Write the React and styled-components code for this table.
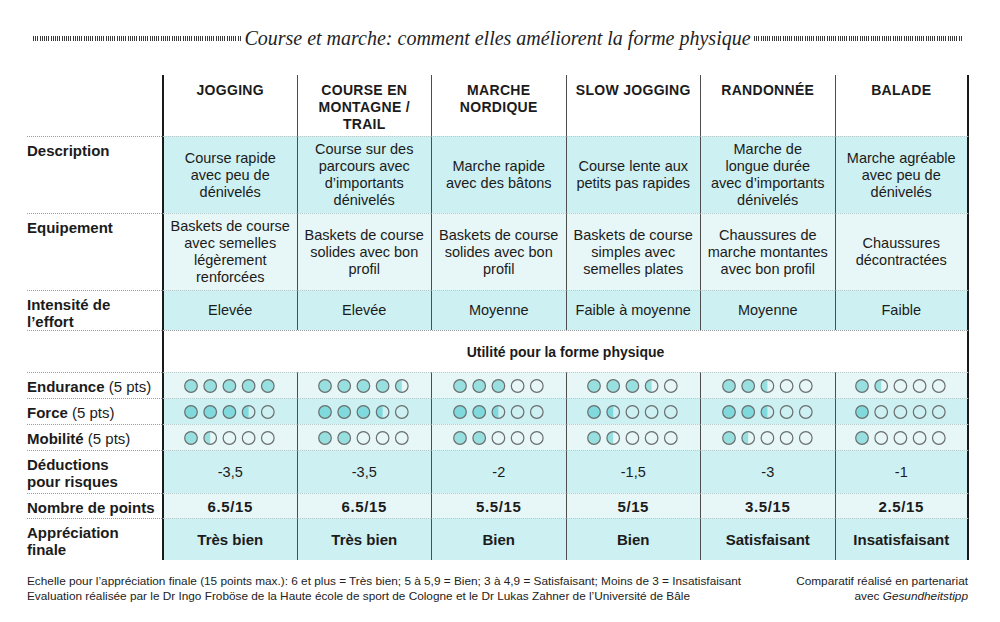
import React from 'react';
import styled, { createGlobalStyle } from 'styled-components';

const GlobalStyle = createGlobalStyle`
  html, body {
    margin: 0;
    padding: 0;
    background: #ffffff;
  }
  body {
    font-family: 'Liberation Sans', Arial, sans-serif;
    color: #1b1b1b;
  }
`;

const CYAN = '#cdf0f2';
const LIGHT = '#e7f6f6';

const Page = styled.div`
  width: 1000px;
  height: 622px;
  box-sizing: border-box;
  padding: 24px 32px 0 27px;
  overflow: hidden;
`;

const TitleRow = styled.div`
  display: flex;
  align-items: center;
  gap: 3px;
  height: 28px;
  padding: 0 6px;
`;

const Hatch = styled.div`
  flex: 1;
  height: 5px;
  margin-top: 1px;
  background: repeating-linear-gradient(90deg, #3a3a3a 0 1px, transparent 1px 2.2px);
`;

const Title = styled.h1`
  margin: 0;
  font-family: 'Liberation Serif', 'Times New Roman', serif;
  font-style: italic;
  font-weight: normal;
  font-size: 20px;
  color: #1f1f1f;
  white-space: nowrap;
`;

const Table = styled.div`
  display: grid;
  grid-template-columns: 135px repeat(6, 134.5px);
  margin-top: 23px;
`;

const Label = styled.div`
  box-sizing: border-box;
  padding: 5px 4px 0 0;
  font-size: 15px;
  line-height: 17px;
  font-weight: bold;
  white-space: pre-line;
  border-top: ${({ $noLine }) => ($noLine ? 'none' : '1px dotted #9c9c9c')};
  height: ${({ $h }) => $h}px;

  span {
    font-weight: normal;
  }
`;

const Cell = styled.div`
  box-sizing: border-box;
  height: ${({ $h }) => $h}px;
  display: flex;
  align-items: center;
  justify-content: center;
  text-align: center;
  padding: 0 2px;
  white-space: pre-line;
  background: ${({ $bg }) => $bg};
  font-size: ${({ $bold }) => ($bold ? '15px' : '14.5px')};
  font-weight: ${({ $bold }) => ($bold ? 'bold' : 'normal')};
  letter-spacing: ${({ $wide }) => ($wide ? '0.6px' : '0')};
  line-height: 17px;
  border-top: 1px dotted #b9cccc;
  border-left: ${({ $first }) => ($first ? '2px solid #1a1a1a' : '1px solid #4d4d4d')};
  border-right: ${({ $last }) => ($last ? '2px solid #1a1a1a' : 'none')};
`;

const HeadCell = styled(Cell)`
  align-items: flex-start;
  padding-top: 7px;
  border-top: none;
  font-size: 14px;
  letter-spacing: 0.3px;
  text-transform: uppercase;
`;

const SpanCell = styled.div`
  grid-column: span 6;
  box-sizing: border-box;
  height: ${({ $h }) => $h}px;
  display: flex;
  align-items: center;
  justify-content: center;
  font-size: 14px;
  font-weight: bold;
  border-top: 1px dotted #9c9c9c;
  border-left: 2px solid #1a1a1a;
  border-right: 2px solid #1a1a1a;
  background: #ffffff;
`;

const Footer = styled.div`
  display: flex;
  justify-content: space-between;
  margin-top: 14px;
  font-size: 11.8px;
  line-height: 15px;
  color: #222;
`;

const FootRight = styled.div`
  text-align: right;

  em {
    font-style: italic;
  }
`;

const activities = ['Jogging', 'Course en\nmontagne /\ntrail', 'Marche\nnordique', 'Slow jogging', 'Randonnée', 'Balade'];

const rows = [
  {
    label: 'Description',
    h: 77,
    bg: CYAN,
    values: [
      'Course rapide\navec peu de\ndénivelés',
      'Course sur des\nparcours avec\nd’importants\ndénivelés',
      'Marche rapide\navec des bâtons',
      'Course lente aux\npetits pas rapides',
      'Marche de\nlongue durée\navec d’importants\ndénivelés',
      'Marche agréable\navec peu de\ndénivelés',
    ],
  },
  {
    label: 'Equipement',
    h: 77,
    bg: LIGHT,
    values: [
      'Baskets de course\navec semelles\nlégèrement\nrenforcées',
      'Baskets de course\nsolides avec bon\nprofil',
      'Baskets de course\nsolides avec bon\nprofil',
      'Baskets de course\nsimples avec\nsemelles plates',
      'Chaussures de\nmarche montantes\navec bon profil',
      'Chaussures\ndécontractées',
    ],
  },
  {
    label: 'Intensité de\nl’effort',
    h: 40,
    bg: CYAN,
    values: ['Elevée', 'Elevée', 'Moyenne', 'Faible à moyenne', 'Moyenne', 'Faible'],
  },
  { span: 'Utilité pour la forme physique', h: 42 },
  { label: 'Endurance', pts: true, h: 26, bg: LIGHT, fill: '#98e0e0', dots: [5, 4.5, 3, 3.5, 2.5, 1.5] },
  { label: 'Force', pts: true, h: 26, bg: CYAN, fill: '#80dadd', dots: [3.5, 3.5, 2.5, 1.5, 2.5, 1] },
  { label: 'Mobilité', pts: true, h: 26, bg: LIGHT, fill: '#98e0e0', dots: [1.5, 2, 2, 1.5, 1.5, 1] },
  {
    label: 'Déductions\npour risques',
    h: 43,
    bg: CYAN,
    values: ['-3,5', '-3,5', '-2', '-1,5', '-3', '-1'],
  },
  {
    label: 'Nombre de points',
    h: 25,
    bg: LIGHT,
    bold: true,
    wide: true,
    values: ['6.5/15', '6.5/15', '5.5/15', '5/15', '3.5/15', '2.5/15'],
  },
  {
    label: 'Appréciation\nfinale',
    h: 42,
    bg: CYAN,
    bold: true,
    values: ['Très bien', 'Très bien', 'Bien', 'Bien', 'Satisfaisant', 'Insatisfaisant'],
  },
];

const Dots = ({ score, fill }) => {
  const r = 6.3;
  return (
    <svg width="94" height="16" viewBox="0 0 94 16">
      {[0, 1, 2, 3, 4].map((i) => {
        const cx = 8 + i * 19.2;
        const cy = 8;
        const level = Math.max(0, Math.min(1, score - i));
        return (
          <g key={i}>
            {level >= 1 && <circle cx={cx} cy={cy} r={r} fill={fill} />}
            {level > 0 && level < 1 && (
              <path d={`M${cx} ${cy - r} A${r} ${r} 0 0 0 ${cx} ${cy + r} Z`} fill={fill} />
            )}
            <circle cx={cx} cy={cy} r={r} fill="none" stroke="#6a6e6e" strokeWidth="1.2" />
          </g>
        );
      })}
    </svg>
  );
};

const App = () => (
  <Page>
    <GlobalStyle />
    <TitleRow>
      <Hatch />
      <Title>Course et marche: comment elles améliorent la forme physique</Title>
      <Hatch />
    </TitleRow>

    <Table>
      <Label $noLine $h={61} />
      {activities.map((a, i) => (
        <HeadCell key={a} $h={61} $bg="#fff" $bold $first={i === 0} $last={i === 5}>
          {a}
        </HeadCell>
      ))}

      {rows.map((row) => {
        if (row.span) {
          return (
            <React.Fragment key={row.span}>
              <Label $h={row.h} />
              <SpanCell $h={row.h}>{row.span}</SpanCell>
            </React.Fragment>
          );
        }
        return (
          <React.Fragment key={row.label}>
            <Label $h={row.h}>
              {row.label}
              {row.pts && <span> (5 pts)</span>}
            </Label>
            {(row.values || row.dots).map((v, i) => (
              <Cell
                key={i}
                $h={row.h}
                $bg={row.bg}
                $bold={row.bold}
                $wide={row.wide}
                $first={i === 0}
                $last={i === 5}
              >
                {row.dots ? <Dots score={v} fill={row.fill} /> : v}
              </Cell>
            ))}
          </React.Fragment>
        );
      })}
    </Table>

    <Footer>
      <div>
        Echelle pour l’appréciation finale (15 points max.): 6 et plus = Très bien; 5 à 5,9 = Bien; 3 à 4,9 =
        Satisfaisant; Moins de 3 = Insatisfaisant
        <br />
        Evaluation réalisée par le Dr Ingo Froböse de la Haute école de sport de Cologne et le Dr Lukas Zahner de
        l’Université de Bâle
      </div>
      <FootRight>
        Comparatif réalisé en partenariat
        <br />
        avec <em>Gesundheitstipp</em>
      </FootRight>
    </Footer>
  </Page>
);

export default App;
